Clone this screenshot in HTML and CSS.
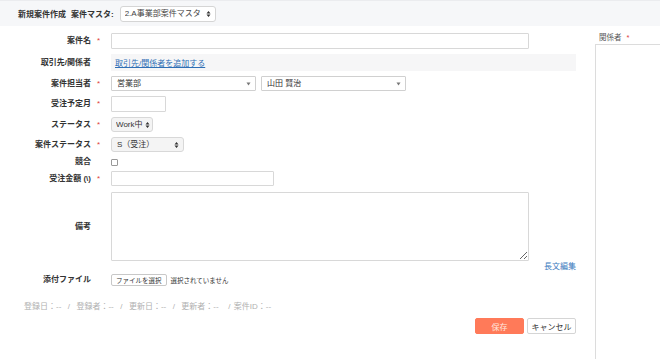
FILE: index.html
```html
<!DOCTYPE html>
<html>
<head>
<meta charset="utf-8">
<title>新規案件作成</title>
<link rel="stylesheet" href="styles.css">
</head>
<body>

<div class="header">
  <span class="title">新規案件作成</span>
  <span class="title">案件マスタ:</span>
  <div class="select master">
    <select><option>2.A事業部案件マスタ</option></select>
    <svg class="arrow" width="5" height="7" viewBox="0 0 5 7"><path d="M0.5 3 L2.5 0.5 L4.5 3 Z M0.5 4 L2.5 6.5 L4.5 4 Z" fill="#333"/></svg>
  </div>
</div>

<div class="page">
  <form class="form">
    <div class="row h16">
      <label class="label">案件名</label><span class="req">*</span>
      <input type="text" class="input w-name">
    </div>
    <div class="row h17">
      <label class="label">取引先/関係者</label><span class="req"></span>
      <div class="linkbox"><a href="#">取引先/関係者を追加する</a></div>
    </div>
    <div class="row h15">
      <label class="label">案件担当者</label><span class="req">*</span>
      <div class="select user">
        <select><option>営業部</option></select>
        <svg class="arrow" width="5" height="4" viewBox="0 0 5 4"><path d="M0.5 0.5 L4.5 0.5 L2.5 3.5 Z" fill="#777"/></svg>
      </div>
      <div class="select user">
        <select><option>山田 賢治</option></select>
        <svg class="arrow" width="5" height="4" viewBox="0 0 5 4"><path d="M0.5 0.5 L4.5 0.5 L2.5 3.5 Z" fill="#777"/></svg>
      </div>
    </div>
    <div class="row h16">
      <label class="label">受注予定月</label><span class="req">*</span>
      <input type="text" class="input w-month">
    </div>
    <div class="row h15">
      <label class="label">ステータス</label><span class="req">*</span>
      <div class="select gray w-status">
        <select><option>Work中</option></select>
        <svg class="arrow" width="5" height="7" viewBox="0 0 5 7"><path d="M0.5 3 L2.5 0.5 L4.5 3 Z M0.5 4 L2.5 6.5 L4.5 4 Z" fill="#333"/></svg>
      </div>
    </div>
    <div class="row h15">
      <label class="label">案件ステータス</label><span class="req">*</span>
      <div class="select gray w-stage">
        <select><option>S（受注）</option></select>
        <svg class="arrow" width="5" height="7" viewBox="0 0 5 7"><path d="M0.5 3 L2.5 0.5 L4.5 3 Z M0.5 4 L2.5 6.5 L4.5 4 Z" fill="#333"/></svg>
      </div>
    </div>
    <div class="row h10">
      <label class="label">競合</label><span class="req"></span>
      <input type="checkbox" class="check">
    </div>
    <div class="row h15 gap6">
      <label class="label">受注金額 (\)</label><span class="req">*</span>
      <input type="text" class="input w-amount">
    </div>
    <div class="row area-row">
      <label class="label">備考</label><span class="req"></span>
      <textarea class="area"></textarea>
    </div>
    <div class="longedit"><a href="#">長文編集</a></div>
    <div class="row h12">
      <label class="label">添付ファイル</label><span class="req"></span>
      <button type="button" class="filebtn">ファイルを選択</button>
      <span class="filetext">選択されていません</span>
    </div>

    <div class="meta">登録日：-- &nbsp;/&nbsp; 登録者：-- &nbsp;/&nbsp; 更新日：-- &nbsp;/&nbsp; 更新者：-- &nbsp;&nbsp;/ 案件ID：--</div>

    <div class="actions">
      <button type="button" class="btn save">保存</button>
      <button type="button" class="btn cancel">キャンセル</button>
    </div>
  </form>

  <div class="side">
    <div class="side-label">関係者 <span class="star">*</span></div>
    <div class="side-box"></div>
  </div>
</div>

</body>
</html>
```

FILE: styles.css
```css
body {
  font-family: "Liberation Sans", "Noto Sans CJK JP", sans-serif;
  font-size: 8px;
  color: #333;
  background-color: #fff;
  margin: 0;
  padding: 0;
}

.header {
  display: flex;
  align-items: center;
  gap: 5px;
  height: 26px;
  padding-left: 18px;
  background-color: #f6f7f9;
  border-top: 1px solid #ebecef;
  box-sizing: border-box;
}

.title {
  font-weight: bold;
  font-size: 8px;
  color: #333;
}

.select {
  position: relative;
  display: flex;
}

.select select {
  appearance: none;
  -webkit-appearance: none;
  width: 100%;
  height: 100%;
  margin: 0;
  padding: 0 12px 0 5px;
  font-family: inherit;
  font-size: 8px;
  color: #333;
  background-color: #fff;
  border: 1px solid #d5d5d5;
  border-radius: 3px;
  outline: none;
}

.select .arrow {
  position: absolute;
  right: 5px;
  top: 50%;
  transform: translateY(-50%);
  pointer-events: none;
}

.master {
  width: 96px;
  height: 16px;
  margin-left: 1px;
}

.master select {
  padding-left: 4px;
  color: #444;
}

.page {
  display: flex;
}

.form {
  width: 576px;
  padding-top: 7px;
  flex-shrink: 0;
}

.row {
  display: flex;
  align-items: center;
  margin-bottom: 5px;
}

.h10 {
  height: 10px;
  margin-bottom: 4px;
}

.h12 {
  height: 12px;
}

.h15 {
  height: 15px;
}

.h16 {
  height: 16px;
}

.h17 {
  height: 17px;
}

.gap6 {
  margin-bottom: 6px;
}

.area-row {
  height: 69px;
  margin-bottom: 0;
}

.label {
  width: 91px;
  text-align: right;
  font-weight: bold;
  color: #333;
  line-height: 10px;
}

.req {
  width: 20px;
  box-sizing: border-box;
  padding-left: 6px;
  color: #e0403a;
  font-size: 8px;
  line-height: 10px;
}

.input {
  height: 16px;
  margin: 0;
  padding: 0 4px;
  border: 1px solid #d8d8d8;
  border-radius: 1px;
  box-sizing: border-box;
  font-family: inherit;
  font-size: 8px;
  outline: none;
}

.h15 .input {
  height: 15px;
}

.w-name {
  width: 418px;
}

.w-month {
  width: 55px;
}

.w-amount {
  width: 163px;
}

.linkbox {
  flex: 1;
  height: 17px;
  display: flex;
  align-items: center;
  padding-left: 4px;
  background-color: #f6f6f7;
}

a {
  color: #2f6fb5;
}

.linkbox a {
  text-decoration: underline;
  font-size: 8px;
}

.user {
  width: 145px;
  height: 15px;
  margin-right: 5px;
}

.user select {
  border-radius: 1px;
  border-color: #d0d0d0;
}

.gray select {
  background-color: #f4f4f4;
  border-color: #d8d8d8;
  border-radius: 3px;
}

.w-status {
  width: 42px;
  height: 15px;
}

.w-status select {
  padding: 0 8px 0 4px;
}

.w-status .arrow {
  right: 3px;
}

.w-stage {
  width: 73px;
  height: 15px;
}

.check {
  appearance: none;
  -webkit-appearance: none;
  width: 7px;
  height: 7px;
  margin: 0;
  border: 1px solid #999;
  border-radius: 1px;
  background-color: #fff;
}

.area {
  width: 418px;
  height: 69px;
  margin: 0;
  padding: 3px;
  border: 1px solid #d8d8d8;
  border-radius: 1px;
  box-sizing: border-box;
  font-family: inherit;
  font-size: 8px;
  outline: none;
}

.longedit {
  text-align: right;
  height: 11px;
  line-height: 11px;
  margin-bottom: 2px;
}

.longedit a {
  text-decoration: none;
  font-size: 8px;
  color: #3a78bd;
}

.filebtn {
  height: 12px;
  padding: 0 4px;
  margin: 0 4px 0 0;
  font-family: inherit;
  font-size: 6.5px;
  color: #333;
  background-color: #fff;
  border: 1px solid #c8c8c8;
  border-radius: 2px;
}

.filetext {
  font-size: 6.5px;
  color: #333;
}

.meta {
  margin-top: 16px;
  padding-left: 24px;
  height: 10px;
  line-height: 10px;
  font-size: 8px;
  color: #b0b0b0;
  word-spacing: 1px;
}

.actions {
  display: flex;
  justify-content: flex-end;
  gap: 3px;
  margin-top: 6px;
}

.btn {
  width: 49px;
  height: 16px;
  margin: 0;
  padding: 0;
  font-family: inherit;
  font-size: 8px;
  border-radius: 2px;
  cursor: pointer;
}

.save {
  background-color: #ff7a59;
  border: 1px solid #ff7a59;
  color: #ffe6de;
}

.cancel {
  background-color: #fff;
  border: 1px solid #d5d5d5;
  color: #333;
}

.side {
  flex: 1;
  margin-left: 19px;
  padding-top: 5px;
}

.side-label {
  height: 13px;
  padding-left: 4px;
  font-size: 7.5px;
  color: #555;
}

.side-label .star {
  color: #e0403a;
  margin-left: 3px;
}

.side-box {
  height: 320px;
  border-top: 1px solid #dcdcdc;
  border-left: 1px solid #dcdcdc;
}
```
